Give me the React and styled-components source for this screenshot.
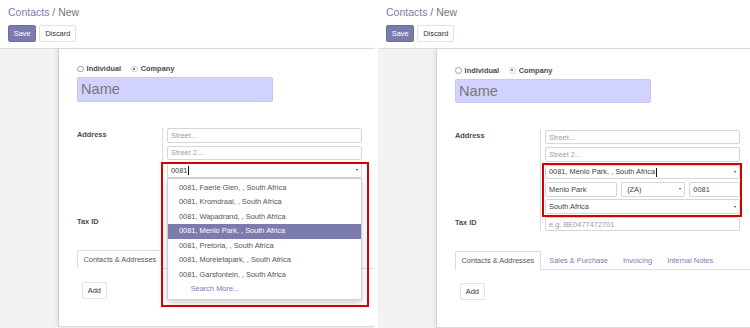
import React from "react";
import styled, { createGlobalStyle, css } from "styled-components";

const PURPLE = "#7c7bad";
const TEXT = "#4c4c4c";
const LINE = "#dcdcdc";

const SUGGESTIONS = [
  "Faerie Glen",
  "Kromdraai",
  "Wapadrand",
  "Menlo Park",
  "Pretoria",
  "Moreletapark",
  "Garsfontein",
];

const TABS = ["Contacts & Addresses", "Sales & Purchase", "Invoicing", "Internal Notes"];

export default function App() {
  return (
    <>
      <GlobalStyle />
      <Screen>
        <ContactForm open $width="375px" />
        <ContactForm filled shift={1.5} />
      </Screen>
    </>
  );
}

function ContactForm({ open, filled, shift = 0, $width }) {
  // while the suggestion list is open, whatever lies under it is not visible
  return (
    <Pane $width={$width}>
      <ControlPanel>
        <Breadcrumb>
          <Crumb>Contacts</Crumb> / New
        </Breadcrumb>
        <Buttons>
          <Button $primary>Save</Button>
          <Button>Discard</Button>
        </Buttons>
      </ControlPanel>

      <Body>
        <Sheet $shift={shift}>
          <TypeRow>
            <Choice>
              <Radio />
              Individual
            </Choice>
            <Choice>
              <Radio $checked />
              Company
            </Choice>
          </TypeRow>

          <NameInput>Name</NameInput>

          <Group>
            <Label>Address</Label>
            <Fields>
              <Input $placeholder>Street...</Input>
              <Input $placeholder>Street 2...</Input>

              {open && (
                <>
                  <Marked $inset="-1.5px -6.7px -129.5px -6.3px">
                    <Input>
                      <span>
                        0081<Caret />
                      </span>
                      <Arrow />
                    </Input>
                    <Dropdown>
                      {SUGGESTIONS.map((place) => (
                        <Option key={place} $active={place === "Menlo Park"}>
                          0081, {place}, , South Africa
                        </Option>
                      ))}
                      <Option $more>Search More...</Option>
                    </Dropdown>
                  </Marked>
                  <CityRow $covered>
                    <Input $grow={73} $placeholder>City</Input>
                    <Input $grow={64} $placeholder>
                      State <Arrow />
                    </Input>
                    <Input $grow={49} $placeholder>ZIP</Input>
                  </CityRow>
                  <Input $placeholder $covered>
                    Country <Arrow />
                  </Input>
                </>
              )}

              {filled && (
                <Marked $inset="-2px -1.5px -3px -3px" $stack>
                  <Input>
                    <span>
                      0081, Menlo Park, , South Africa<Caret />
                    </span>
                    <Arrow />
                  </Input>
                  <CityRow>
                    <Input $grow={73}>Menlo Park</Input>
                    <Input $grow={64}>
                      <span>&nbsp;(ZA)</span>
                      <Arrow />
                    </Input>
                    <Input $grow={49}>0081</Input>
                  </CityRow>
                  <Input>
                    South Africa <Arrow />
                  </Input>
                </Marked>
              )}
            </Fields>

            <Label>Tax ID</Label>
            <Fields $last>
              <Input $placeholder $covered={open}>
                e.g. BE0477472701
              </Input>
            </Fields>
          </Group>

          <TabList>
            {TABS.map((tab, i) => (
              <Tab key={tab} $active={i === 0} $covered={open && i > 0}>
                {tab}
              </Tab>
            ))}
          </TabList>

          <AddButton>Add</AddButton>
        </Sheet>
      </Body>
    </Pane>
  );
}

const GlobalStyle = createGlobalStyle`
  html, body {
    margin: 0;
    padding: 0;
    background: #fff;
    overflow: hidden;
  }
  body {
    font-family: "Liberation Sans", Arial, sans-serif;
    color: ${TEXT};
  }
`;

const covered = css`
  ${(p) => p.$covered && css`visibility: hidden;`}
`;

const Screen = styled.div`
  display: flex;
  gap: 3px;
  width: 750px;
  height: 328px;
`;

const Pane = styled.div`
  display: flex;
  flex-direction: column;
  overflow: hidden;
  ${(p) => (p.$width ? css`width: ${p.$width}; flex: none;` : css`flex: 1;`)}
`;

const ControlPanel = styled.div`
  padding: 5px 8px 5.7px;
  border-bottom: 1px solid ${LINE};
  box-shadow: 0 1px 0 #ececec;
`;

const Breadcrumb = styled.div`
  font-size: 10.5px;
  line-height: 14px;
  color: #777;
`;

const Crumb = styled.span`
  color: ${PURPLE};
`;

const Buttons = styled.div`
  display: flex;
  gap: 3px;
  margin-top: 6px;
`;

const Button = styled.div`
  box-sizing: border-box;
  height: 17.3px;
  padding: 0 4.8px;
  display: flex;
  align-items: center;
  font-size: 7.4px;
  border-radius: 2px;
  border: 1px solid ${(p) => (p.$primary ? "#6f6ea0" : "#e2e2e2")};
  background: ${(p) => (p.$primary ? PURPLE : "#fff")};
  color: ${(p) => (p.$primary ? "#fff" : "#333")};
`;

const Body = styled.div`
  flex: 1;
  display: flex;
  padding-bottom: 2px;
  background: #f6f6f6
    repeating-conic-gradient(#ebebeb 0 25%, #fafafa 0 50%) 0 0 / 2px 2px;
`;

const Sheet = styled.div`
  flex: 1;
  margin-left: 58px;
  padding: ${(p) => 15 + p.$shift}px 0 27px 18px;
  background: #fff;
  border-left: 1px solid #d0d0d0;
  border-bottom: 1px solid ${LINE};
  box-shadow: -2px 0 4px rgba(0, 0, 0, 0.06);
`;

const TypeRow = styled.div`
  display: flex;
  height: 10px;
  align-items: center;
`;

const Choice = styled.label`
  display: inline-flex;
  align-items: center;
  margin-right: 10px;
  font-size: 7.4px;
  font-weight: bold;
  color: ${TEXT};
`;

const Radio = styled.span`
  box-sizing: border-box;
  position: relative;
  width: 6.6px;
  height: 6.6px;
  margin-right: 3px;
  border-radius: 50%;
  background: #fff;
  border: 1px solid ${(p) => (p.$checked ? "#d0d0d0" : "#a0a0a0")};

  ${(p) =>
    p.$checked &&
    css`
      &::after {
        content: "";
        position: absolute;
        inset: 1.3px;
        border-radius: 50%;
        background: #555;
      }
    `}
`;

const NameInput = styled.div`
  box-sizing: border-box;
  width: 196px;
  height: 24.4px;
  margin-top: 3.3px;
  padding-left: 3px;
  display: flex;
  align-items: center;
  font-size: 14.6px;
  color: #777;
  background: #d2d2ff;
  border: 1px solid #c6c6f0;
  border-radius: 2px;
`;

const Group = styled.div`
  display: grid;
  grid-template-columns: 86px 199px;
  margin-top: 26.6px;
`;

const Label = styled.div`
  padding-top: 1.3px;
  line-height: 9px;
  font-size: 7.4px;
  font-weight: bold;
  color: ${TEXT};
  border-right: 1px solid ${LINE};
`;

const Fields = styled.div`
  display: flex;
  flex-direction: column;
  gap: 2.8px;
  padding-left: 4px;
  padding-bottom: ${(p) => (p.$last ? 0 : 2.8)}px;
`;

const Input = styled.div`
  box-sizing: border-box;
  height: 14.6px;
  padding: 0 3px;
  display: flex;
  align-items: center;
  justify-content: space-between;
  font-size: 7.4px;
  white-space: nowrap;
  color: ${(p) => (p.$placeholder ? "#9b9b9b" : "#444")};
  background: #fff;
  border: 1px solid #d6d6d6;
  border-radius: 2px;
  ${(p) => p.$grow && css`flex: ${p.$grow} 1 0;`}
  ${covered}
`;

const Caret = styled.span`
  display: inline-block;
  width: 1px;
  height: 9px;
  margin-left: 0.5px;
  vertical-align: middle;
  background: #111;
`;

const Arrow = styled.span`
  width: 0;
  height: 0;
  border-left: 1.5px solid transparent;
  border-right: 1.5px solid transparent;
  border-top: 2px solid #444;
`;

const CityRow = styled.div`
  display: flex;
  gap: 4.5px;
  ${covered}
`;

const Marked = styled.div`
  position: relative;
  ${(p) =>
    p.$stack &&
    css`
      display: flex;
      flex-direction: column;
      gap: 2.8px;
    `}

  &::after {
    content: "";
    position: absolute;
    inset: ${(p) => p.$inset};
    border: 2px solid #d60000;
    z-index: 3;
    pointer-events: none;
  }
`;

const Dropdown = styled.ul`
  position: absolute;
  top: 100%;
  left: 0;
  right: 0;
  z-index: 2;
  margin: 0;
  padding: 2px 0;
  list-style: none;
  background: #fff;
  border: 1px solid #cfcfcf;
  box-shadow: 0 3px 6px rgba(0, 0, 0, 0.18);
`;

const Option = styled.li`
  height: 14.5px;
  line-height: 14.5px;
  padding-left: ${(p) => (p.$more ? 22.7 : 11)}px;
  font-size: 7.4px;
  white-space: nowrap;
  color: ${(p) => (p.$active ? "#fff" : p.$more ? PURPLE : "#555")};
  background: ${(p) => (p.$active ? PURPLE : "transparent")};
`;

const TabList = styled.div`
  display: flex;
  margin-top: 20.1px;
  border-bottom: 1px solid ${LINE};
`;

const Tab = styled.div`
  box-sizing: border-box;
  height: 19px;
  margin-bottom: -1px;
  margin-right: 2px;
  padding: 0 5.5px;
  line-height: 17px;
  font-size: 7.4px;
  white-space: nowrap;
  border: 1px solid transparent;
  border-radius: 2px 2px 0 0;
  color: ${(p) => (p.$active ? "#555" : PURPLE)};

  ${(p) =>
    p.$active &&
    css`
      background: #fff;
      border-color: ${LINE};
      border-bottom-color: #fff;
    `}
  ${covered}
`;

const AddButton = styled(Button)`
  display: inline-flex;
  margin: 12.7px 0 0 5px;
`;
